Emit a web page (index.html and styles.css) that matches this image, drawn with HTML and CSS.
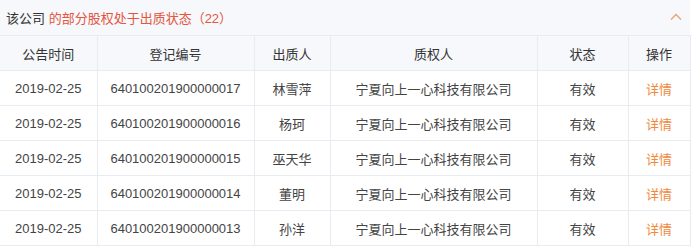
FILE: index.html
```html
<!DOCTYPE html>
<html lang="zh">
<head>
<meta charset="utf-8">
<link rel="stylesheet" href="styles.css">
</head>
<body>
<div class="panel">
  <div class="bar">
    <div class="title">该公司 <span class="hl">的部分股权处于出质状态（22）</span></div>
    <svg class="chev" width="12" height="8" viewBox="0 0 12 8"><path d="M1 6.5 L6 1.5 L11 6.5" fill="none" stroke="#e9a476" stroke-width="1.4"/></svg>
  </div>
  <table class="tbl">
    <colgroup>
      <col class="c1"><col class="c2"><col class="c3"><col class="c4"><col class="c5"><col class="c6">
    </colgroup>
    <thead>
      <tr><th>公告时间</th><th>登记编号</th><th>出质人</th><th>质权人</th><th>状态</th><th>操作</th></tr>
    </thead>
    <tbody>
      <tr><td>2019-02-25</td><td>640100201900000017</td><td>林雪萍</td><td>宁夏向上一心科技有限公司</td><td>有效</td><td class="op">详情</td></tr>
      <tr><td>2019-02-25</td><td>640100201900000016</td><td>杨珂</td><td>宁夏向上一心科技有限公司</td><td>有效</td><td class="op">详情</td></tr>
      <tr><td>2019-02-25</td><td>640100201900000015</td><td>巫天华</td><td>宁夏向上一心科技有限公司</td><td>有效</td><td class="op">详情</td></tr>
      <tr><td>2019-02-25</td><td>640100201900000014</td><td>董明</td><td>宁夏向上一心科技有限公司</td><td>有效</td><td class="op">详情</td></tr>
      <tr><td>2019-02-25</td><td>640100201900000013</td><td>孙洋</td><td>宁夏向上一心科技有限公司</td><td>有效</td><td class="op">详情</td></tr>
    </tbody>
  </table>
</div>
</body>
</html>
```

FILE: styles.css
```css
html, body {
  margin: 0;
  padding: 0;
  background: #ffffff;
}
body {
  font-family: "Liberation Sans", "Noto Sans CJK SC", sans-serif;
  color: #333;
  font-size: 13px;
}
.panel {
  width: 690px;
  background: #f6f8fb;
}
.bar {
  height: 35px;
  display: flex;
  align-items: center;
  justify-content: space-between;
  padding: 0 8px 0 6px;
  box-sizing: border-box;
}
.title {
  font-size: 13px;
  color: #333;
}
.hl {
  color: #e5563f;
}
.chev {
  display: block;
  margin-top: -2px;
}
.tbl {
  width: 690px;
  border-collapse: collapse;
  table-layout: fixed;
}
.c1 { width: 97px; }
.c2 { width: 157px; }
.c3 { width: 76px; }
.c4 { width: 207px; }
.c5 { width: 91px; }
.c6 { width: 62px; }
.tbl th, .tbl td {
  border: 1px solid #e8ecf1;
  height: 34px;
  padding: 0;
  text-align: center;
  font-weight: normal;
  white-space: nowrap;
  color: #444;
}
.tbl thead th {
  background: #f6f8fb;
  color: #333;
}
.tbl tbody td {
  background: #fff;
}
.tbl th:first-child, .tbl td:first-child {
  border-left: none;
}
.tbl td.op {
  color: #f0893c;
}
```
